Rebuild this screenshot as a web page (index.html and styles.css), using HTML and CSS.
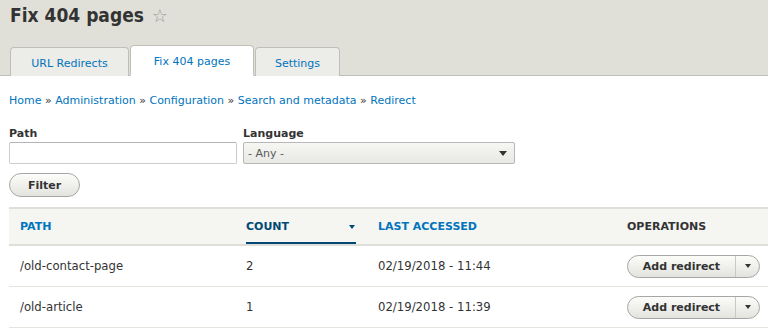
FILE: index.html
```html
<!DOCTYPE html>
<html lang="en">
<head>
  <meta charset="UTF-8" />
  <title>Fix 404 pages</title>
  <link rel="stylesheet" href="styles.css">
</head>
<body>
  <div class="page-header">
    <h1>Fix 404 pages <span class="star">&#9734;</span></h1>
    <ul class="tabs">
      <li class="tab-redirects"><a href="#">URL Redirects</a></li>
      <li class="tab-fix active"><a href="#">Fix 404 pages</a></li>
      <li class="tab-settings"><a href="#">Settings</a></li>
    </ul>
  </div>

  <div class="content">
    <nav class="breadcrumb">
      <a href="#">Home</a> » <a href="#">Administration</a> » <a href="#">Configuration</a> » <a href="#">Search and metadata</a> » <a href="#">Redirect</a>
    </nav>

    <form class="filters">
      <div class="filter-row">
        <div class="field">
          <label for="path">Path</label>
          <input type="text" id="path" class="text-input">
        </div>
        <div class="field">
          <label for="lang">Language</label>
          <div class="select">
            <span>- Any -</span>
            <span class="caret"></span>
          </div>
        </div>
      </div>
      <button type="button" class="button">Filter</button>
    </form>

    <table class="list">
      <thead>
        <tr>
          <th class="col-path"><a href="#">PATH</a></th>
          <th class="col-count"><a href="#" class="sorted">COUNT <span class="caret small"></span></a></th>
          <th class="col-date"><a href="#">LAST ACCESSED</a></th>
          <th class="col-ops">OPERATIONS</th>
        </tr>
      </thead>
      <tbody>
        <tr>
          <td>/old-contact-page</td>
          <td>2</td>
          <td>02/19/2018 - 11:44</td>
          <td>
            <div class="dropbutton">
              <span class="main">Add redirect</span><span class="toggle"><span class="caret small"></span></span>
            </div>
          </td>
        </tr>
        <tr>
          <td>/old-article</td>
          <td>1</td>
          <td>02/19/2018 - 11:39</td>
          <td>
            <div class="dropbutton">
              <span class="main">Add redirect</span><span class="toggle"><span class="caret small"></span></span>
            </div>
          </td>
        </tr>
      </tbody>
    </table>
  </div>
</body>
</html>
```

FILE: styles.css
```css
body {
  margin: 0;
  font-family: 'DejaVu Sans', sans-serif;
  font-size: 11px;
  color: #333;
  background: #fff;
  overflow: hidden;
}
a {
  color: #0074bd;
  text-decoration: none;
}
.page-header {
  background: #e0e0d8;
  border-bottom: 1px solid #bebfb9;
  padding: 0 0 0 10px;
}
h1 {
  margin: 0;
  padding-top: 4px;
  height: 41px;
  font-family: 'DejaVu Sans Condensed', 'DejaVu Sans', sans-serif;
  font-stretch: condensed;
  font-size: 19px;
  font-weight: bold;
  color: #333;
}
.star {
  font-family: 'DejaVu Sans', sans-serif;
  font-stretch: normal;
  font-weight: normal;
  font-size: 18px;
  color: #999;
  margin-left: 2px;
}
.tabs {
  list-style: none;
  margin: 0 0 -1px;
  padding: 0;
  display: flex;
  align-items: flex-end;
}
.tabs li {
  box-sizing: border-box;
  background: #ecece8;
  border: 1px solid #bebfb9;
  border-bottom: none;
  border-radius: 4px 4px 0 0;
  margin-right: 1px;
  height: 29px;
  display: flex;
  align-items: center;
  justify-content: center;
  white-space: nowrap;
}
.tabs .tab-redirects { width: 119px; }
.tabs .tab-fix { width: 124px; }
.tabs .tab-settings { width: 85px; }
.tabs li.active {
  background: #fff;
  height: 31px;
  border-bottom: 1px solid #fff;
}
.tabs a {
  font-size: 11px;
  position: relative;
  top: 1px;
}
.content {
  padding: 0 0 0 9px;
}
.breadcrumb {
  padding-top: 18px;
  height: 18px;
  color: #333;
}
.filters {
  padding-top: 15px;
}
.filter-row {
  display: flex;
  gap: 6px;
}
.field label {
  display: block;
  font-weight: bold;
  margin-bottom: 2px;
}
.text-input {
  box-sizing: border-box;
  width: 228px;
  height: 22px;
  border: 1px solid #ccc;
  border-top-color: #b4b4b4;
  border-radius: 2px;
  background: #fff;
  margin: 0;
}
.select {
  box-sizing: border-box;
  width: 272px;
  height: 22px;
  border: 1px solid #b8b8b8;
  border-radius: 2px;
  background: linear-gradient(#f6f6f3, #e8e8e5);
  display: flex;
  align-items: center;
  justify-content: space-between;
  padding: 0 7px 0 4px;
  color: #595959;
}
.caret {
  width: 0;
  height: 0;
  border-left: 4px solid transparent;
  border-right: 4px solid transparent;
  border-top: 5px solid #333;
}
.caret.small {
  border-left-width: 3px;
  border-right-width: 3px;
  border-top-width: 4px;
}
.button {
  margin-top: 9px;
  box-sizing: border-box;
  width: 71px;
  height: 24px;
  border: 1px solid #a6a6a6;
  border-radius: 12px;
  background: linear-gradient(#fcfcfa, #e3e3de);
  font-family: inherit;
  font-size: 11px;
  font-weight: bold;
  color: #333;
  padding: 0;
}
.list {
  margin-top: 10px;
  width: calc(100% + 20px);
  border-collapse: collapse;
  table-layout: fixed;
}
.list thead tr {
  background: #f5f5f2;
  border-top: 2px solid #dfded9;
  border-bottom: 2px solid #dfded9;
}
.list th {
  height: 35px;
  text-align: left;
  padding: 0 11px;
  font-weight: bold;
  color: #333;
}
.list th.col-path { width: 204px; }
.list th.col-count { width: 110px; }
.list th.col-date { width: 227px; }
.list th a {
  color: #0074bd;
}
.list th a.sorted {
  color: #004875;
  display: flex;
  justify-content: space-between;
  align-items: center;
  height: 35px;
  box-sizing: border-box;
  border-bottom: 2px solid #004875;
  padding-top: 2px;
}
.list th a.sorted .caret {
  border-top-color: #004875;
  margin-right: 1px;
}
.list td {
  height: 40px;
  padding: 0 11px;
  border-bottom: 1px solid #e6e4df;
  font-size: 11.7px;
}
.dropbutton {
  display: flex;
  width: 133px;
  height: 23px;
  box-sizing: border-box;
  border: 1px solid #a6a6a6;
  border-radius: 12px;
  background: linear-gradient(#fcfcfa, #e3e3de);
  font-size: 11px;
  font-weight: bold;
  color: #333;
}
.dropbutton .main {
  flex: 1;
  display: flex;
  align-items: center;
  justify-content: center;
  border-right: 1px solid #c8c8c4;
}
.dropbutton .toggle {
  width: 23px;
  display: flex;
  align-items: center;
  justify-content: center;
}
```
